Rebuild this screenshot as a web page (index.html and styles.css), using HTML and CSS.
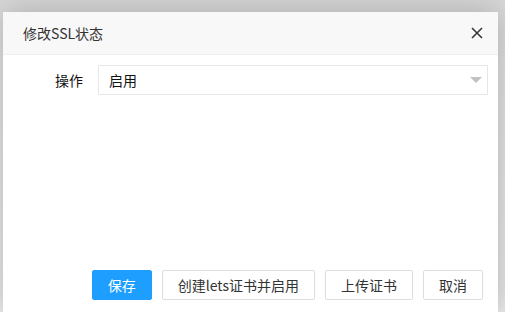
FILE: index.html
```html
<!DOCTYPE html>
<html lang="zh-CN">
<head>
    <meta charset="UTF-8">
    <meta name="viewport" content="width=device-width, initial-scale=1.0">
    <title>修改SSL状态</title>
    <link rel="stylesheet" href="styles.css">
</head>
<body>
    <div class="layer">
        <div class="layer-title">
            <span>修改SSL状态</span>
            <a class="layer-close" href="#" title="关闭">
                <svg width="12" height="12" viewBox="0 0 12 12">
                    <path d="M1 1L11 11M11 1L1 11" stroke="#333" stroke-width="1.5" fill="none"/>
                </svg>
            </a>
        </div>

        <div class="layer-content">
            <!-- status select -->
            <div class="form-item">
                <label class="form-label">操作</label>
                <div class="select">
                    <span>启用</span>
                    <i class="select-arrow"></i>
                </div>
            </div>
        </div>

        <div class="layer-btn">
            <a class="btn btn-primary" href="#">保存</a>
            <a class="btn" href="#">创建lets证书并启用</a>
            <a class="btn" href="#">上传证书</a>
            <a class="btn" href="#">取消</a>
        </div>
    </div>
</body>
</html>
```

FILE: styles.css
```css
body {
    margin: 0;
    height: 312px;
    overflow: hidden;
    font-family: "Noto Sans CJK SC", "Liberation Sans", sans-serif;
    font-size: 14px;
    color: #333;
    background: linear-gradient(#d8d8d8, #e4e4e4 60px, #ececec);
}

.layer {
    margin: 12px 7px 0 3px;
    height: 300px;
    background: #fff;
    display: flex;
    flex-direction: column;
    box-shadow: 1px 1px 30px rgba(0, 0, 0, 0.25);
}

.layer-title {
    height: 42px;
    line-height: 42px;
    padding: 0 15px 0 20px;
    background: #f8f8f8;
    border-bottom: 1px solid #eee;
    display: flex;
    justify-content: space-between;
    align-items: center;
    color: #333;
}

.layer-close {
    display: flex;
    align-items: center;
}

.layer-content {
    flex: 1;
    padding: 10px 10px 0 0;
}

.form-item {
    display: flex;
    align-items: center;
}

.form-label {
    flex-shrink: 0;
    width: 80px;
    text-align: right;
    padding-right: 15px;
    color: #111;
}

.select {
    flex: 1;
    height: 28px;
    border: 1px solid #e6e6e6;
    padding: 0 10px;
    display: flex;
    align-items: center;
    justify-content: space-between;
    color: #111;
}

.select-arrow {
    width: 0;
    height: 0;
    border-left: 6px solid transparent;
    border-right: 6px solid transparent;
    border-top: 6px solid #c2c2c2;
    margin-right: -5px;
}

.layer-btn {
    display: flex;
    justify-content: flex-end;
    gap: 10px;
    padding: 0 15px 12px 0;
}

.btn {
    height: 28px;
    line-height: 28px;
    padding: 0 15px;
    border: 1px solid #dedede;
    border-radius: 2px;
    background: #fff;
    color: #333;
    text-decoration: none;
}

.btn-primary {
    background: #1e9fff;
    border-color: #1e9fff;
    color: #fff;
}
```
